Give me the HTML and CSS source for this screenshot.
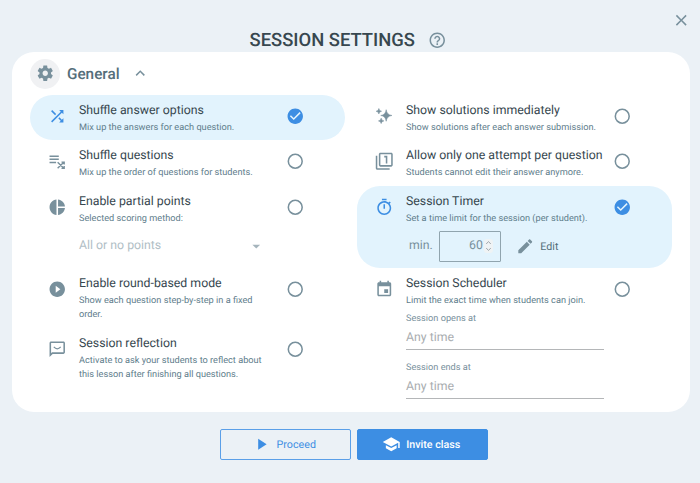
FILE: index.html
```html
<!DOCTYPE html>
<html lang="en">
<head>
    <meta charset="UTF-8">
    <meta name="viewport" content="width=device-width, initial-scale=1.0">
    <title>Session Settings</title>
    <link rel="stylesheet" href="styles.css">
</head>
<body>
    <svg class="sprite">
        <symbol id="radio" viewBox="0 0 24 24"><circle cx="12" cy="12" r="9" fill="none" stroke="currentColor" stroke-width="2"/></symbol>
        <symbol id="checked" viewBox="0 0 24 24"><path d="M12 2C6.480 2 2 6.480 2 12s4.480 10 10 10 10-4.480 10-10S17.520 2 12 2zm-2 15l-5-5 1.410-1.410L10 14.170l7.590-7.590L19 8l-9 9z"/></symbol>
    </svg>

    <header class="header">
        <button class="close" aria-label="Close">
            <svg class="icon" viewBox="0 0 24 24"><path d="M19 6.410L17.590 5 12 10.590 6.410 5 5 6.410 10.590 12 5 17.590 6.410 19 12 13.410 17.590 19 19 17.590 13.410 12z"/></svg>
        </button>
        <h1>SESSION SETTINGS</h1>
        <svg class="icon" viewBox="0 0 24 24"><path d="M11 18h2v-2h-2v2zm1-16C6.480 2 2 6.480 2 12s4.480 10 10 10 10-4.480 10-10S17.520 2 12 2zm0 18c-4.410 0-8-3.590-8-8s3.590-8 8-8 8 3.590 8 8-3.590 8-8 8zm0-14c-2.210 0-4 1.790-4 4h2c0-1.100.9-2 2-2s2 .9 2 2c0 2-3 1.750-3 5h2c0-2.250 3-2.500 3-5 0-2.210-1.790-4-4-4z"/></svg>
    </header>

    <main class="panel">
        <div class="section-title">
            <span class="gear">
                <svg class="icon" viewBox="0 0 24 24"><path d="M19.430 12.980c.04-.32.07-.64.07-.98s-.03-.66-.07-.98l2.110-1.650c.19-.15.24-.42.12-.64l-2-3.460c-.12-.22-.39-.3-.61-.22l-2.490 1c-.52-.4-1.080-.73-1.690-.98l-.38-2.650C14.460 2.180 14.250 2 14 2h-4c-.25 0-.46.18-.49.42l-.38 2.650c-.61.25-1.170.59-1.690.98l-2.490-1c-.23-.09-.49 0-.61.22l-2 3.460c-.13.22-.07.49.12.64l2.110 1.650c-.04.32-.07.65-.07.98s.03.66.07.98l-2.110 1.650c-.19.15-.24.42-.12.64l2 3.460c.12.22.39.3.61.22l2.490-1c.52.4 1.080.73 1.690.98l.38 2.650c.03.24.24.42.49.42h4c.25 0 .46-.18.49-.42l.38-2.650c.61-.25 1.170-.59 1.690-.98l2.490 1c.23.09.49 0 .61-.22l2-3.460c.12-.22.07-.49-.12-.64l-2.110-1.650zM12 15.500c-1.930 0-3.500-1.570-3.500-3.500s1.570-3.500 3.500-3.500 3.500 1.570 3.500 3.500-1.570 3.500-3.500 3.500z"/></svg>
            </span>
            <h2>General</h2>
            <svg class="icon" viewBox="0 0 24 24"><path d="M12 8l-6 6 1.410 1.410L12 10.830l4.590 4.580L18 14z"/></svg>
        </div>

        <div class="columns">
            <div class="column">
                <div class="option active">
                    <svg class="icon" viewBox="0 0 24 24"><path d="M10.590 9.170L5.410 4 4 5.410l5.170 5.170 1.420-1.410zM14.500 4l2.040 2.040L4 18.590 5.410 20 17.960 7.460 20 9.500V4h-5.500zm.33 9.410l-1.410 1.410 3.130 3.130L14.500 20H20v-5.500l-2.040 2.040-3.130-3.130z"/></svg>
                    <div class="text">
                        <h3>Shuffle answer options</h3>
                        <p>Mix up the answers for each question.</p>
                    </div>
                    <svg class="icon check"><use href="#checked"/></svg>
                </div>
                <div class="option">
                    <svg class="icon" viewBox="0 0 24 24"><path d="M2 4.500h12v2H2zM2 8.500h12v2H2zM2 12.500h8.500v2H2z"/><path d="M12.500 13.200l8 8M12.500 21.200l8-8M17.500 13.200h3.500v3M17.500 21.200h3.500v-3" fill="none" stroke="currentColor" stroke-width="1.800"/></svg>
                    <div class="text">
                        <h3>Shuffle questions</h3>
                        <p>Mix up the order of questions for students.</p>
                    </div>
                    <svg class="icon check"><use href="#radio"/></svg>
                </div>
                <div class="option">
                    <svg class="icon" viewBox="0 0 24 24"><path d="M11 2v20c-5.070-.5-9-4.790-9-10s3.930-9.500 9-10zm2.030 0v8.990H22c-.47-4.740-4.240-8.520-8.970-8.990zm0 11.010V22c4.740-.47 8.500-4.250 8.970-8.990h-8.970z"/></svg>
                    <div class="text">
                        <h3>Enable partial points</h3>
                        <p>Selected scoring method:</p>
                        <div class="select">All or no points
                            <svg class="icon" viewBox="0 0 24 24"><path d="M7 10l5 5 5-5z"/></svg>
                        </div>
                    </div>
                    <svg class="icon check"><use href="#radio"/></svg>
                </div>
                <div class="option">
                    <svg class="icon" viewBox="0 0 24 24"><path d="M12 2C6.480 2 2 6.480 2 12s4.480 10 10 10 10-4.480 10-10S17.520 2 12 2zm-2 14.500v-9l6 4.500-6 4.500z"/></svg>
                    <div class="text">
                        <h3>Enable round-based mode</h3>
                        <p>Show each question step-by-step in a fixed order.</p>
                    </div>
                    <svg class="icon check"><use href="#radio"/></svg>
                </div>
                <div class="option">
                    <svg class="icon" viewBox="0 0 24 24"><path d="M20 2H4c-1.100 0-2 .9-2 2v18l4-4h14c1.100 0 2-.9 2-2V4c0-1.100-.9-2-2-2zm0 14H5.200L4 17.200V4h16v12z"/><path d="M7.500 9q4.500 5 9 0" fill="none" stroke="currentColor" stroke-width="1.600"/></svg>
                    <div class="text">
                        <h3>Session reflection</h3>
                        <p>Activate to ask your students to reflect about this lesson after finishing all questions.</p>
                    </div>
                    <svg class="icon check"><use href="#radio"/></svg>
                </div>
            </div>

            <div class="column">
                <div class="option">
                    <svg class="icon" viewBox="0 0 24 24"><path d="M14.500 3.500Q15.300 10.200 22 11Q15.300 11.800 14.500 18.500Q13.700 11.800 7.500 11Q13.700 10.200 14.500 3.500zM5 2Q5.300 5.200 8.500 5.500Q5.300 5.800 5 9Q4.700 5.800 1.500 5.500Q4.700 5.200 5 2zM8 14.500Q8.300 17.700 11.500 18Q8.300 18.300 8 21.500Q7.700 18.300 4.500 18Q7.700 17.700 8 14.500z" stroke="currentColor" stroke-width=".7"/></svg>
                    <div class="text">
                        <h3>Show solutions immediately</h3>
                        <p>Show solutions after each answer submission.</p>
                    </div>
                    <svg class="icon check"><use href="#radio"/></svg>
                </div>
                <div class="option">
                    <svg class="icon" viewBox="0 0 24 24"><path d="M3 5H1v16c0 1.100.9 2 2 2h16v-2H3V5zm11 10h2V5h-4v2h2v8zm7-14H7c-1.100 0-2 .9-2 2v14c0 1.100.9 2 2 2h14c1.100 0 2-.9 2-2V3c0-1.100-.9-2-2-2zm0 16H7V3h14v14z"/></svg>
                    <div class="text">
                        <h3>Allow only one attempt per question</h3>
                        <p>Students cannot edit their answer anymore.</p>
                    </div>
                    <svg class="icon check"><use href="#radio"/></svg>
                </div>
                <div class="option active">
                    <svg class="icon" viewBox="0 0 24 24"><path d="M15 1H9v2h6V1zm-4 13h2V8h-2v6zm8.030-6.610l1.420-1.420c-.43-.51-.9-.99-1.410-1.410l-1.420 1.420C16.070 4.740 14.120 4 12 4c-4.970 0-9 4.030-9 9s4.020 9 9 9 9-4.030 9-9c0-2.120-.74-4.070-1.970-5.610zM12 20c-3.870 0-7-3.130-7-7s3.130-7 7-7 7 3.130 7 7-3.130 7-7 7z"/></svg>
                    <div class="text">
                        <h3>Session Timer</h3>
                        <p>Set a time limit for the session (per student).</p>
                        <div class="timer">
                            <span>min.</span>
                            <div class="minutes">60
                                <svg class="spinner" viewBox="0 0 9 14"><path d="M2.200 5l2.300-2.500L6.800 5M2.200 9l2.300 2.500L6.800 9"/></svg>
                            </div>
                            <button class="edit">
                                <svg class="icon" viewBox="0 0 24 24"><path d="M3 17.250V21h3.750L17.810 9.940l-3.750-3.750L3 17.250zM20.710 7.040c.39-.39.39-1.020 0-1.410l-2.340-2.340c-.39-.39-1.020-.39-1.410 0l-1.830 1.830 3.750 3.750 1.830-1.830z"/></svg>
                                Edit
                            </button>
                        </div>
                    </div>
                    <svg class="icon check"><use href="#checked"/></svg>
                </div>
                <div class="option">
                    <svg class="icon" viewBox="0 0 24 24"><path d="M17 12h-5v5h5v-5zM16 1v2H8V1H6v2H5c-1.110 0-1.990.9-1.990 2L3 19c0 1.100.89 2 2 2h14c1.100 0 2-.9 2-2V5c0-1.100-.9-2-2-2h-1V1h-2zm3 18H5V8h14v11z"/></svg>
                    <div class="text">
                        <h3>Session Scheduler</h3>
                        <p>Limit the exact time when students can join.</p>
                        <div class="schedule">
                            <label class="field">Session opens at
                                <span class="value">Any time</span>
                            </label>
                            <label class="field">Session ends at
                                <span class="value">Any time</span>
                            </label>
                        </div>
                    </div>
                    <svg class="icon check"><use href="#radio"/></svg>
                </div>
            </div>
        </div>
    </main>

    <footer class="actions">
        <button class="button">
            <svg class="icon" viewBox="0 0 24 24"><path d="M8 5v14l11-7z"/></svg>
            Proceed
        </button>
        <button class="button primary">
            <svg class="icon" viewBox="0 0 24 24"><path d="M5 13.180v4L12 21l7-3.820v-4L12 17l-7-3.820zM12 3L1 9l11 6 9-4.910V17h2V9L12 3z"/></svg>
            Invite class
        </button>
    </footer>
</body>
</html>
```
FILE: styles.css
```css
* {
    box-sizing: border-box;
}
body {
    margin: 0;
    height: 483px;
    background-color: #ebf1f6;
    color: #37474f;
    font-family: Roboto, 'Liberation Sans', sans-serif;
    text-rendering: geometricPrecision;
    overflow: hidden;
}
h1, h2, h3, p {
    margin: 0;
}
button {
    font-family: inherit;
    text-rendering: inherit;
    background: none;
    border: none;
    padding: 0;
}
.sprite {
    display: none;
}
.icon {
    width: 18.5px;
    height: 18.5px;
    fill: currentColor;
    color: #78909c;
    flex-shrink: 0;
}
.header {
    display: flex;
    justify-content: center;
    align-items: center;
    gap: 13px;
    height: 52px;
    padding: 28px 0 0 0;
    margin-left: -4px;
}
h1 {
    font-size: 18.4px;
    font-weight: 500;
    line-height: 24px;
    padding-top: 1px;
}
.close {
    position: absolute;
    top: 10.5px;
    right: 10px;
    display: flex;
}
.panel {
    width: 678px;
    height: 360px;
    margin-left: 12px;
    padding: 6px 18px;
    background-color: #fff;
    border-radius: 22px;
}
.section-title {
    display: flex;
    align-items: center;
    height: 31px;
    color: #546e7a;
}
.section-title h2 {
    margin: 0 11px 0 7px;
    font-size: 15.3px;
    font-weight: 500;
}
.gear {
    display: flex;
    justify-content: center;
    align-items: center;
    width: 30px;
    height: 30px;
    border-radius: 50%;
    background-color: #f0f1f3;
}
.columns {
    display: flex;
    gap: 12px;
    margin-top: 6px;
}
.column {
    width: 315px;
}
.option {
    display: flex;
    align-items: flex-start;
    padding: 6px 40px 4.900px 18px;
    border-radius: 23px;
}
.option > .icon {
    margin-top: 6px;
}
.option.active {
    background-color: #e2f3fd;
}
.option.active > .icon {
    color: #3d8ee3;
}
.text {
    width: 198px;
    margin: 0 9.300px 0 12.500px;
}
h3 {
    font-size: 12.300px;
    font-weight: 400;
    line-height: 20px;
    white-space: nowrap;
}
p {
    padding-right: 5px;
    font-size: 9.200px;
    line-height: 14.500px;
    color: #607d8b;
}
.select {
    display: flex;
    justify-content: space-between;
    align-items: center;
    height: 36.500px;
    padding: 3px 12px 0 0;
    font-size: 12.300px;
    color: #b0bec5;
}
.select .icon {
    color: #a5b4bc;
}
.timer {
    display: flex;
    align-items: center;
    height: 36.500px;
    padding: 3px 0 0 3px;
    font-size: 12.300px;
    color: #78909c;
}
.minutes {
    display: flex;
    justify-content: flex-end;
    align-items: center;
    gap: 1px;
    width: 62px;
    height: 31px;
    margin: 0 15px 0 6px;
    padding-right: 7px;
    border: 1px solid #90a4ae;
    border-radius: 1px;
}
.spinner {
    width: 9px;
    height: 14px;
    border-radius: 3px;
    background-color: #eff3f5;
    fill: none;
    stroke: #a3aaae;
}
.edit {
    display: flex;
    align-items: center;
    gap: 6px;
    font-size: 10.700px;
    color: #546e7a;
}
.schedule {
    padding-top: 4px;
}
.field {
    display: block;
    height: 49px;
    font-size: 9.200px;
    line-height: 14px;
    color: #78909c;
}
.field .value {
    display: block;
    height: 24px;
    font-size: 12.300px;
    line-height: 24px;
    color: #a9adb0;
    border-bottom: 1px solid #b4b6b8;
}
.actions {
    display: flex;
    gap: 6px;
    margin: 17px 0 0 220px;
}
.button {
    display: flex;
    justify-content: center;
    align-items: center;
    gap: 6px;
    width: 131px;
    height: 31px;
    padding-right: 3px;
    border: 1px solid #5a9fe8;
    border-radius: 2px;
    color: #3d8ee3;
    font-size: 10.700px;
}
.button .icon {
    color: inherit;
}
.button.primary {
    background-color: #3d8ee3;
    border-color: #3d8ee3;
    color: #fff;
    font-weight: 500;
}
```
